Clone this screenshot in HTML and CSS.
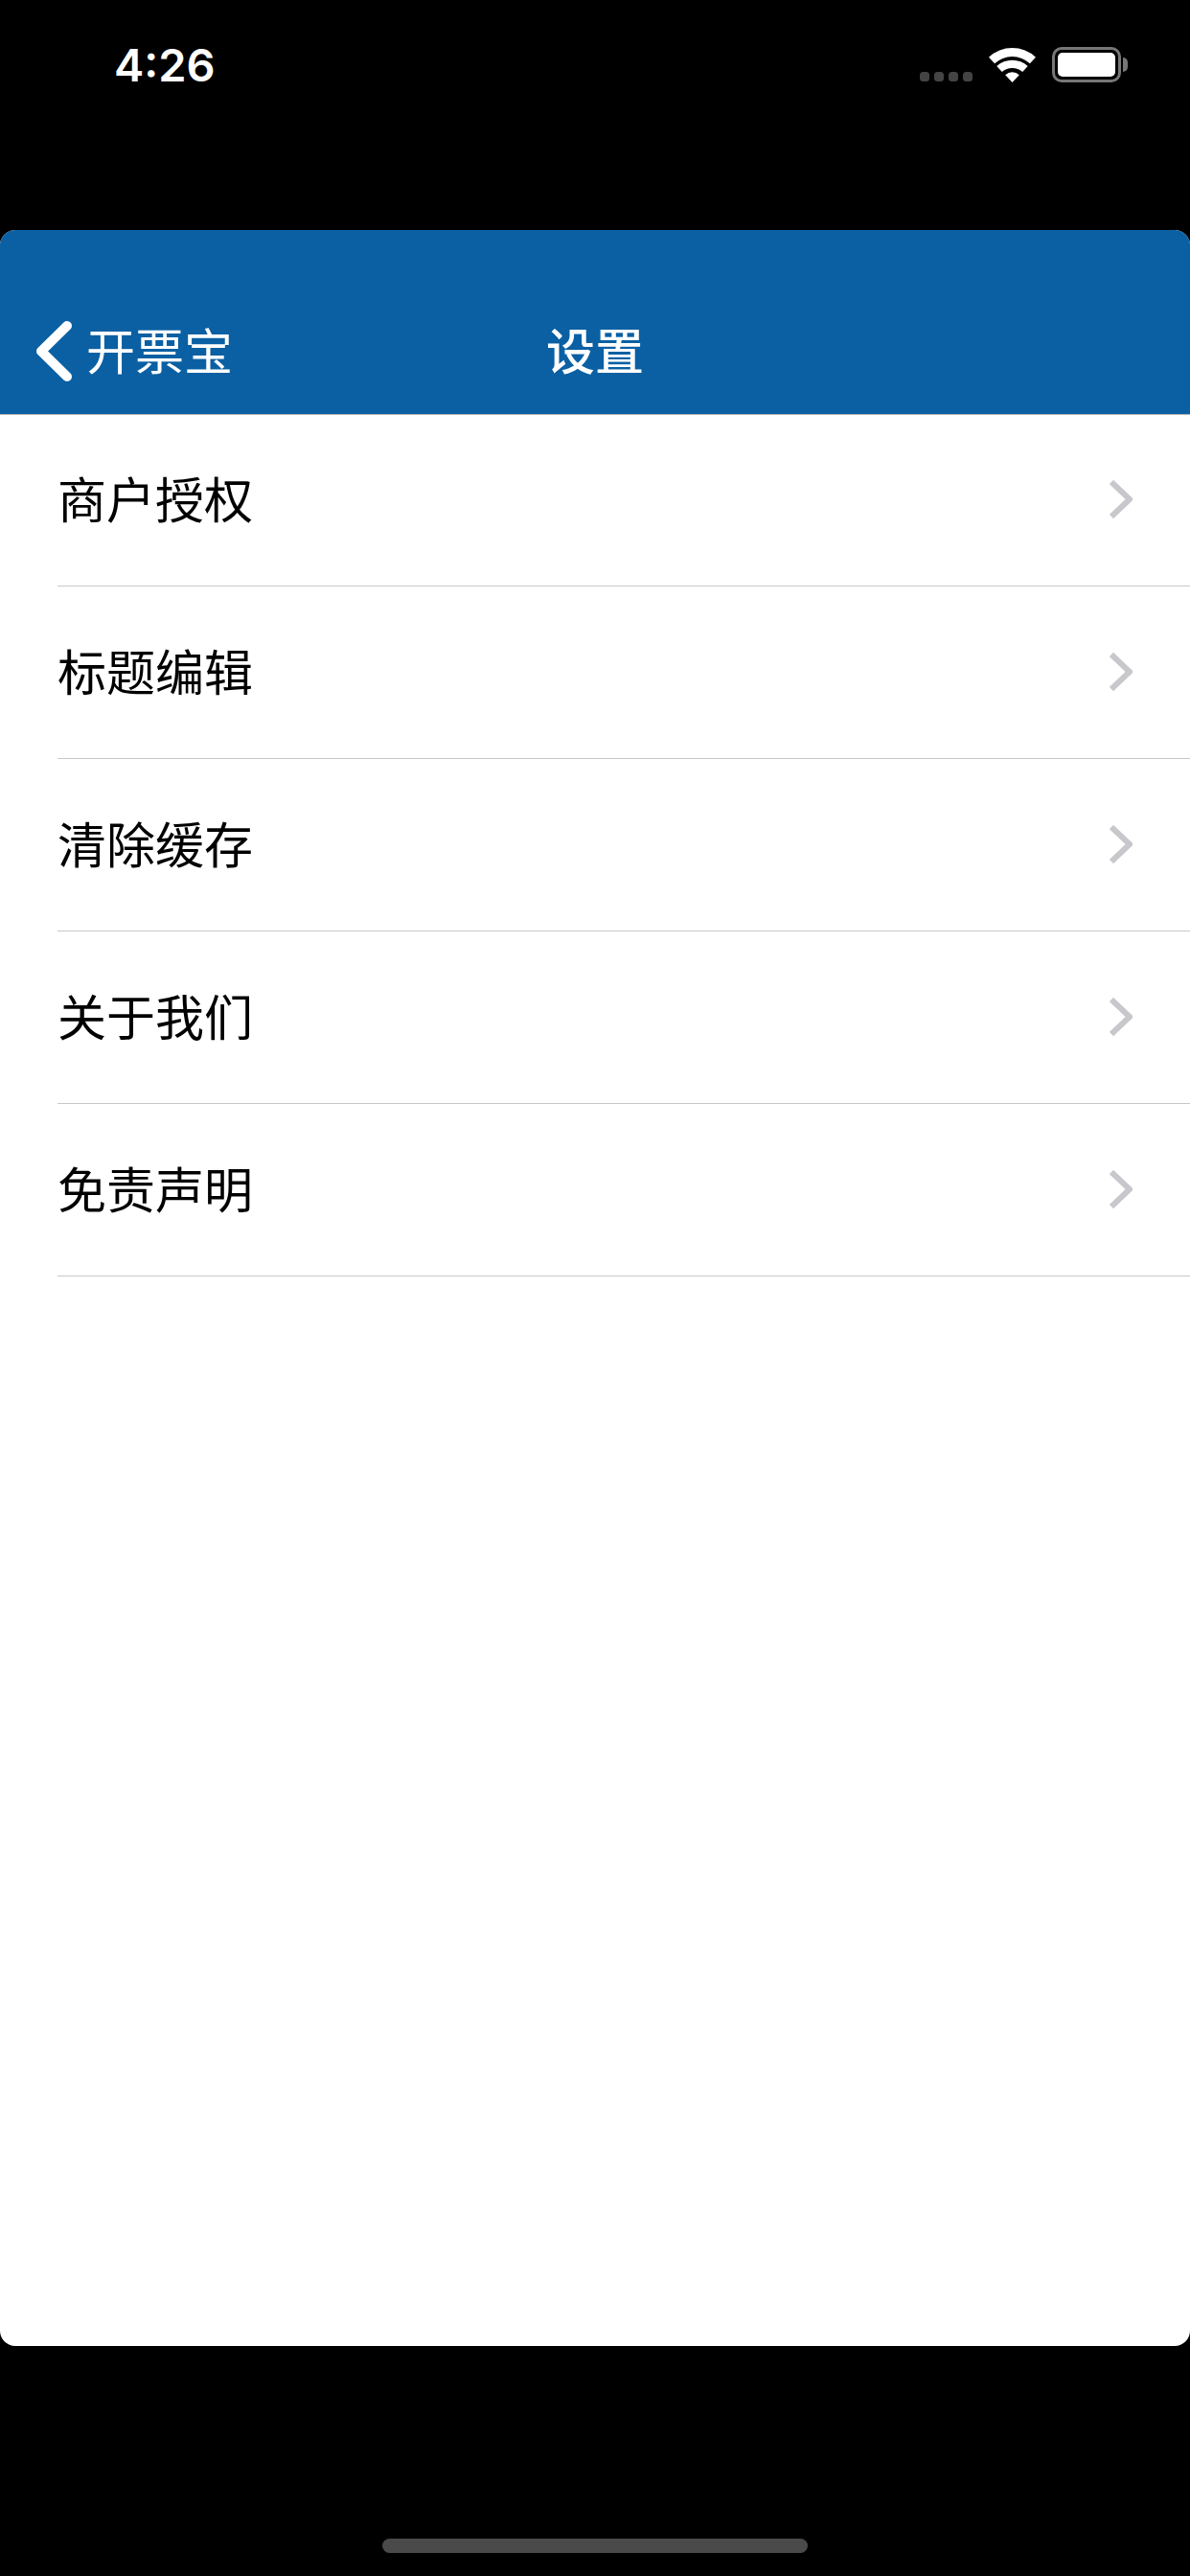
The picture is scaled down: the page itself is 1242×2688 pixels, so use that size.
FILE: index.html
```html
<!DOCTYPE html>
<html lang="zh-CN">
<head>
<meta charset="utf-8">
<title>设置</title>
<link rel="stylesheet" href="styles.css">
</head>
<body>
<div class="screen">
  <header class="status">
    <div class="time">4:26</div>
    <div class="status-icons">
      <div class="dots"><i></i><i></i><i></i><i></i></div>
      <svg class="wifi" width="49" height="37" viewBox="0 0 49 37"><path d="M0 10.7A36 36 0 0 1 49 10.7L42.9 17.3A27 27 0 0 0 6.100 17.3Z"/><path d="M8.300 20A24 24 0 0 1 40.700 20L35.200 26A16 16 0 0 0 13.800 26Z"/><path d="M17.200 29.300A10.400 10.400 0 0 1 31.800 29.300L24.500 37Z"/></svg>
      <div class="battery"><div class="battery-body"><div class="battery-fill"></div></div><div class="battery-nub"></div></div>
    </div>
  </header>
  <main class="card">
    <nav class="nav">
      <div class="back">
        <svg class="back-icon" width="38" height="64" viewBox="0 0 38 64"><path d="M32 5L5 31.500L32 58"/></svg>
        <span>开票宝</span>
      </div>
      <div class="title">设置</div>
    </nav>
    <ul class="list">
      <li class="row"><div class="row-inner"><span class="label">商户授权</span><svg class="chev" width="24" height="40" viewBox="0 0 24 40"><path d="M2 2L21 20L2 38"/></svg></div></li>
      <li class="row"><div class="row-inner"><span class="label">标题编辑</span><svg class="chev" width="24" height="40" viewBox="0 0 24 40"><path d="M2 2L21 20L2 38"/></svg></div></li>
      <li class="row"><div class="row-inner"><span class="label">清除缓存</span><svg class="chev" width="24" height="40" viewBox="0 0 24 40"><path d="M2 2L21 20L2 38"/></svg></div></li>
      <li class="row"><div class="row-inner"><span class="label">关于我们</span><svg class="chev" width="24" height="40" viewBox="0 0 24 40"><path d="M2 2L21 20L2 38"/></svg></div></li>
      <li class="row"><div class="row-inner"><span class="label">免责声明</span><svg class="chev" width="24" height="40" viewBox="0 0 24 40"><path d="M2 2L21 20L2 38"/></svg></div></li>
    </ul>
  </main>
  <footer class="home"><div class="home-bar"></div></footer>
</div>
</body>
</html>
```
FILE: styles.css
```css
* { box-sizing: border-box; }
html, body { margin: 0; padding: 0; background: #000; }
body { font-family: "Noto Sans CJK SC", "Noto Sans", sans-serif; }
.screen { width: 1242px; height: 2688px; display: flex; flex-direction: column; overflow: hidden; }

.status { height: 240px; flex: none; display: flex; justify-content: space-between; align-items: flex-start; padding: 49px 65px 0 119px; }
.time { font-family: Inter, "Liberation Sans", sans-serif; font-weight: 600; font-size: 47px; line-height: 37px; color: #fff; }
.status-icons { display: flex; align-items: flex-start; }
.dots { display: flex; gap: 5px; margin: 26px 17px 0 0; }
.dots i { display: block; width: 10px; height: 10px; border-radius: 3.500px; background: #444; }
.wifi { display: block; fill: #fff; margin-right: 17px; }
.battery { display: flex; align-items: center; height: 37px; }
.battery-body { width: 72px; height: 37px; border: 3px solid #777; border-radius: 10px; padding: 3px; }
.battery-fill { width: 100%; height: 100%; background: #fff; border-radius: 5px; }
.battery-nub { width: 5px; height: 15px; margin-left: 2px; background: #777; border-radius: 0 5px 5px 0; }

.card { height: 2208px; flex: none; background: #fff; border-radius: 16px; overflow: hidden; }
.nav { position: relative; height: 192px; background: #0a60a3; color: #fff; display: grid; grid-template-columns: 1fr auto 1fr; align-items: end; padding-bottom: 36px; box-shadow: 0 1px 0 #b4b4b4; font-size: 51px; line-height: 64px; }
.back { display: flex; align-items: center; padding-left: 38px; gap: 14px; }
.back-icon { display: block; fill: none; stroke: #fff; stroke-width: 10px; stroke-linecap: round; stroke-linejoin: round; transform: translateY(3px); }
.title { font-weight: 500; }

.list { list-style: none; margin: 0; padding: 0; }
.row { height: 180px; padding-left: 60px; font-size: 51px; color: #000; }
.row-inner { height: 100%; display: flex; justify-content: space-between; align-items: center; padding-right: 60px; border-bottom: 1px solid #c8c8c8; }
.label { padding-bottom: 6px; }
.chev { display: block; fill: none; stroke: #c7c7cc; stroke-width: 6px; margin-bottom: 2px; }

.home { flex: 1; display: flex; justify-content: center; align-items: flex-start; padding-top: 201px; }
.home-bar { width: 444px; height: 15px; border-radius: 8px; background: #4a4a4a; }
```
